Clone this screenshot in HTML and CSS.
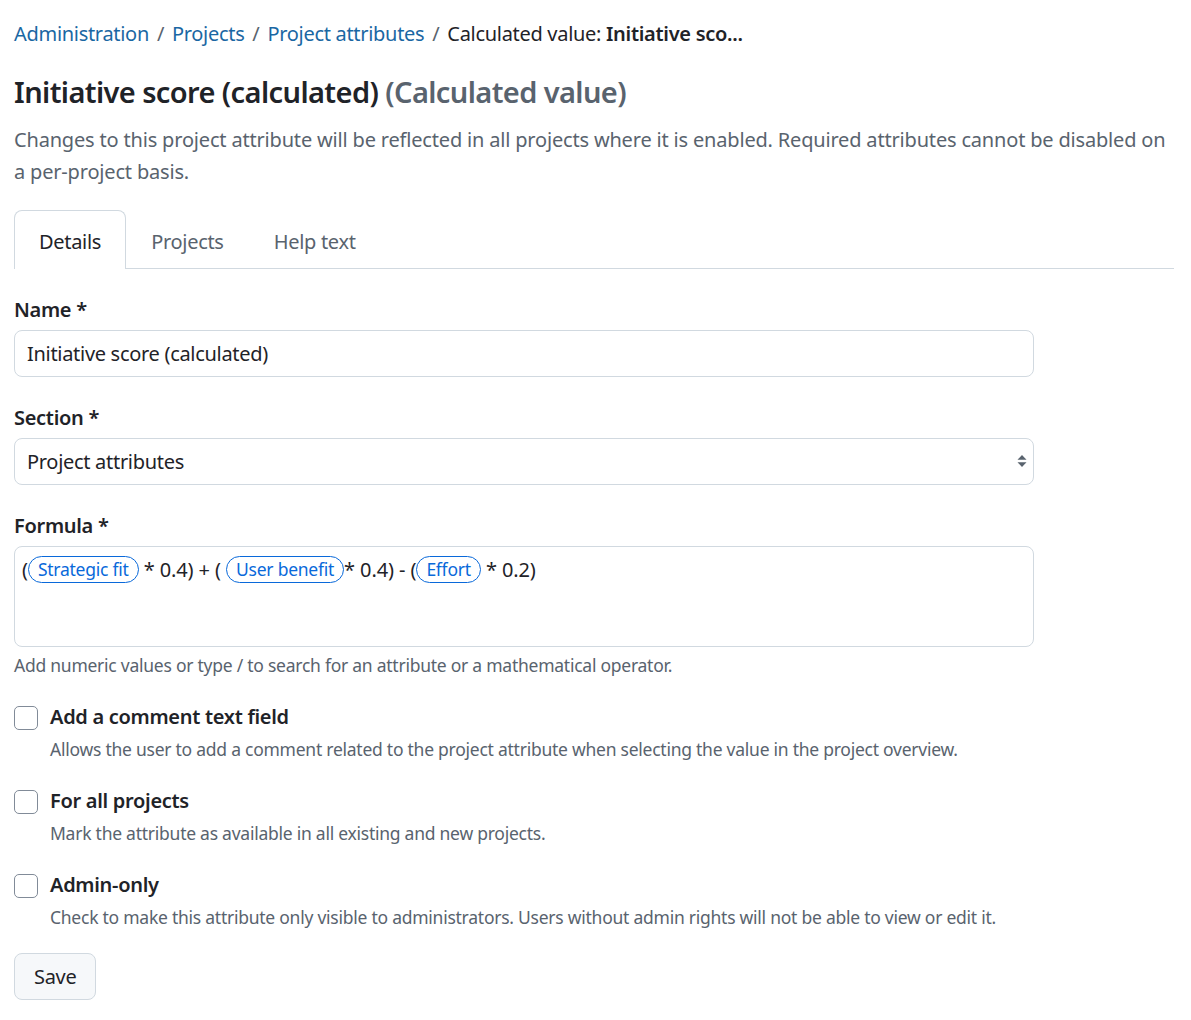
FILE: index.html
```html
<!DOCTYPE html>
<html lang="en">
<head>
    <meta charset="UTF-8">
    <meta name="viewport" content="width=device-width, initial-scale=1.0">
    <title>Calculated value: Initiative score (calculated)</title>
    <link rel="stylesheet" href="styles.css">
</head>
<body>
    <div class="page">
        <nav class="breadcrumb">
            <a href="#">Administration</a>
            <span class="sep">/</span>
            <a href="#">Projects</a>
            <span class="sep">/</span>
            <a href="#">Project attributes</a>
            <span class="sep">/</span>
            <span class="current">Calculated value: <strong>Initiative sco...</strong></span>
        </nav>

        <h1 class="title">Initiative score (calculated) <span class="title-type">(Calculated value)</span></h1>

        <p class="description">Changes to this project attribute will be reflected in all projects where it is enabled. Required attributes cannot be disabled on a per-project basis.</p>

        <div class="tabs">
            <a href="#" class="tab active">Details</a>
            <a href="#" class="tab">Projects</a>
            <a href="#" class="tab">Help text</a>
        </div>

        <form class="attr-form">
            <div class="field">
                <label for="name" class="field-label">Name *</label>
                <input type="text" id="name" class="text-input" value="Initiative score (calculated)">
            </div>

            <div class="field">
                <label for="section" class="field-label">Section *</label>
                <div class="select-wrap">
                    <select id="section" class="text-input select">
                        <option>Project attributes</option>
                    </select>
                    <svg class="select-arrows" width="12" height="18" viewBox="0 0 12 18">
                        <path d="M6 3 L10.5 7.8 L1.5 7.8 Z" fill="#59636e"/>
                        <path d="M6 15 L10.5 10.2 L1.5 10.2 Z" fill="#59636e"/>
                    </svg>
                </div>
            </div>

            <div class="field field-last">
                <label class="field-label">Formula *</label>
                <div class="formula">(<span class="chip">Strategic fit</span> * 0.4) + ( <span class="chip">User benefit</span>* 0.4) - (<span class="chip">Effort</span> * 0.2)</div>
                <div class="caption">Add numeric values or type / to search for an attribute or a mathematical operator.</div>
            </div>

            <div class="check">
                <input type="checkbox" id="comment">
                <div>
                    <label for="comment" class="check-label">Add a comment text field</label>
                    <div class="check-caption">Allows the user to add a comment related to the project attribute when selecting the value in the project overview.</div>
                </div>
            </div>

            <div class="check">
                <input type="checkbox" id="all-projects">
                <div>
                    <label for="all-projects" class="check-label">For all projects</label>
                    <div class="check-caption">Mark the attribute as available in all existing and new projects.</div>
                </div>
            </div>

            <div class="check">
                <input type="checkbox" id="admin-only">
                <div>
                    <label for="admin-only" class="check-label">Admin-only</label>
                    <div class="check-caption">Check to make this attribute only visible to administrators. Users without admin rights will not be able to view or edit it.</div>
                </div>
            </div>

            <button type="button" class="btn">Save</button>
        </form>
    </div>
</body>
</html>
```

FILE: styles.css
```css
body {
    margin: 0;
    padding: 0;
    background-color: #fff;
    font-family: "Noto Sans", "Open Sans", sans-serif;
    color: #1f2328;
    font-size: 20px;
    letter-spacing: -0.3px;
}

.page {
    padding: 18px 17px 20px 14px;
}

a {
    color: #1a67a3;
    text-decoration: none;
}

.breadcrumb {
    font-size: 20px;
    line-height: 32px;
}

.breadcrumb .sep {
    color: #59636e;
    margin: 0 3px;
}

.breadcrumb strong {
    font-weight: 600;
}

.title {
    margin: 22px 0 0;
    font-size: 29px;
    font-weight: 600;
    line-height: 40px;
    letter-spacing: -0.6px;
}

.title-type {
    color: #59636e;
}

.description {
    margin: 12px 0 0;
    color: #59636e;
    line-height: 32px;
    letter-spacing: -0.18px;
}

.tabs {
    display: flex;
    margin-top: 22px;
    border-bottom: 1px solid #d1d9e0;
}

.tab {
    display: block;
    padding: 0 24px;
    height: 57px;
    line-height: 62px;
    color: #59636e;
    border: 1px solid transparent;
    border-bottom: none;
    border-radius: 8px 8px 0 0;
    margin-bottom: -1px;
}

.tab.active {
    color: #1f2328;
    background-color: #fff;
    border-color: #d1d9e0;
    height: 58px;
}

.attr-form {
    padding-top: 26px;
}

.field {
    margin-bottom: 26px;
}

.field-last {
    margin-bottom: 22px;
}

.field-label {
    display: block;
    font-weight: 600;
    line-height: 30px;
    margin-bottom: 5px;
}

.text-input {
    display: block;
    width: 1020px;
    height: 47px;
    box-sizing: border-box;
    padding: 0 12px;
    font-family: inherit;
    font-size: 20px;
    letter-spacing: -0.3px;
    color: #1f2328;
    border: 1px solid #d1d9e0;
    border-radius: 8px;
    background-color: #fff;
}

.select-wrap {
    position: relative;
    width: 1020px;
}

.select {
    appearance: none;
    -webkit-appearance: none;
}

.select-arrows {
    position: absolute;
    right: 6px;
    top: 14px;
}

.formula {
    width: 1020px;
    height: 101px;
    box-sizing: border-box;
    padding: 8px 7px;
    border: 1px solid #d1d9e0;
    border-radius: 8px;
    line-height: 30px;
    letter-spacing: -0.1px;
}

.chip {
    display: inline-block;
    height: 27px;
    line-height: 25px;
    box-sizing: border-box;
    padding: 0 9px;
    font-size: 17.5px;
    letter-spacing: -0.25px;
    color: #0969da;
    border: 1px solid #0969da;
    border-radius: 14px;
    vertical-align: 1px;
}

.caption {
    margin-top: 4px;
    font-size: 17.5px;
    letter-spacing: -0.25px;
    color: #59636e;
    line-height: 28px;
}

.check {
    display: flex;
    gap: 12px;
    margin-bottom: 22px;
}

.check input[type="checkbox"] {
    appearance: none;
    -webkit-appearance: none;
    width: 24px;
    height: 24px;
    margin: 5px 0 0;
    border: 1px solid #818b98;
    border-radius: 5px;
    background-color: #fff;
    flex-shrink: 0;
}

.check-label {
    display: block;
    font-weight: 600;
    line-height: 32px;
    margin-bottom: 2px;
}

.check-caption {
    font-size: 17.5px;
    letter-spacing: -0.25px;
    color: #59636e;
    line-height: 28px;
}

.btn {
    display: block;
    margin-top: 2px;
    height: 47px;
    padding: 0 19px;
    font-family: inherit;
    font-size: 20px;
    letter-spacing: -0.3px;
    color: #1f2328;
    background-color: #f6f8fa;
    border: 1px solid #d1d9e0;
    border-radius: 8px;
}
```
